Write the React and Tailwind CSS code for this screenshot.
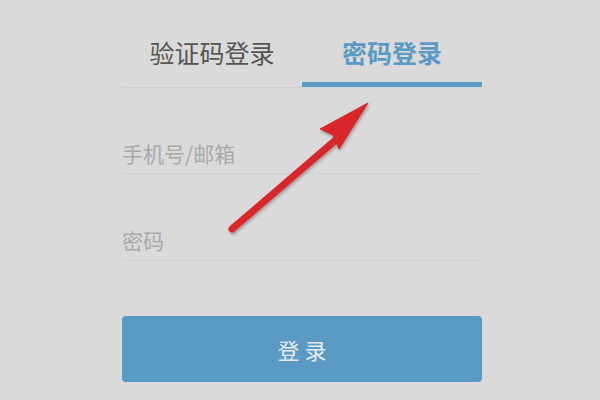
export default function App() {
  const font = { fontFamily: '"Noto Sans CJK SC", "Noto Sans", sans-serif' };
  return (
    <div className="relative w-[600px] h-[400px] bg-[#dadada] overflow-hidden" style={font}>
      <div className="w-[360px] ml-[122px] flex flex-col">
        <div className="flex items-start">
          <div className="flex-1 h-[88px] border-b border-[#cfcfcf] flex justify-center pt-[38px]">
            <span className="text-[25px] leading-[28px] text-[#555555]">验证码登录</span>
          </div>
          <div className="flex-1 h-[87px] border-b-[5px] border-[#5b9ac4] flex justify-center pt-[38px]">
            <span className="text-[25px] leading-[28px] font-bold text-[#5b9ac4]">密码登录</span>
          </div>
        </div>
        <div className="h-[86px] border-b border-[#d0d0d0] flex items-end pb-[8px]">
          <span className="text-[21px] leading-[24px] text-[#a9a9a9]">手机号/邮箱</span>
        </div>
        <div className="h-[87px] border-b border-[#d0d0d0] flex items-end pb-[8px]">
          <span className="text-[21px] leading-[24px] text-[#a9a9a9]">密码</span>
        </div>
        <button className="mt-[55px] h-[66px] w-full rounded-[4px] bg-[#5b9ac4] text-[#e6ebef] text-[22px] leading-[24px]">
          登 录
        </button>
      </div>
      <svg className="absolute left-0 top-0 pointer-events-none" width="600" height="400" viewBox="0 0 600 400">
        <defs>
          <filter id="sh" x="-20%" y="-20%" width="140%" height="140%">
            <feDropShadow dx="1" dy="2" stdDeviation="1.5" floodColor="#000" floodOpacity="0.3" />
          </filter>
        </defs>
        <g filter="url(#sh)" fill="#d8262a" stroke="#d8262a">
          <line x1="232" y1="229" x2="338" y2="138" strokeWidth="7" strokeLinecap="round" />
          <polygon points="368,103 320,129 333,135 339,149" strokeWidth="1" strokeLinejoin="round" />
        </g>
      </svg>
    </div>
  );
}
